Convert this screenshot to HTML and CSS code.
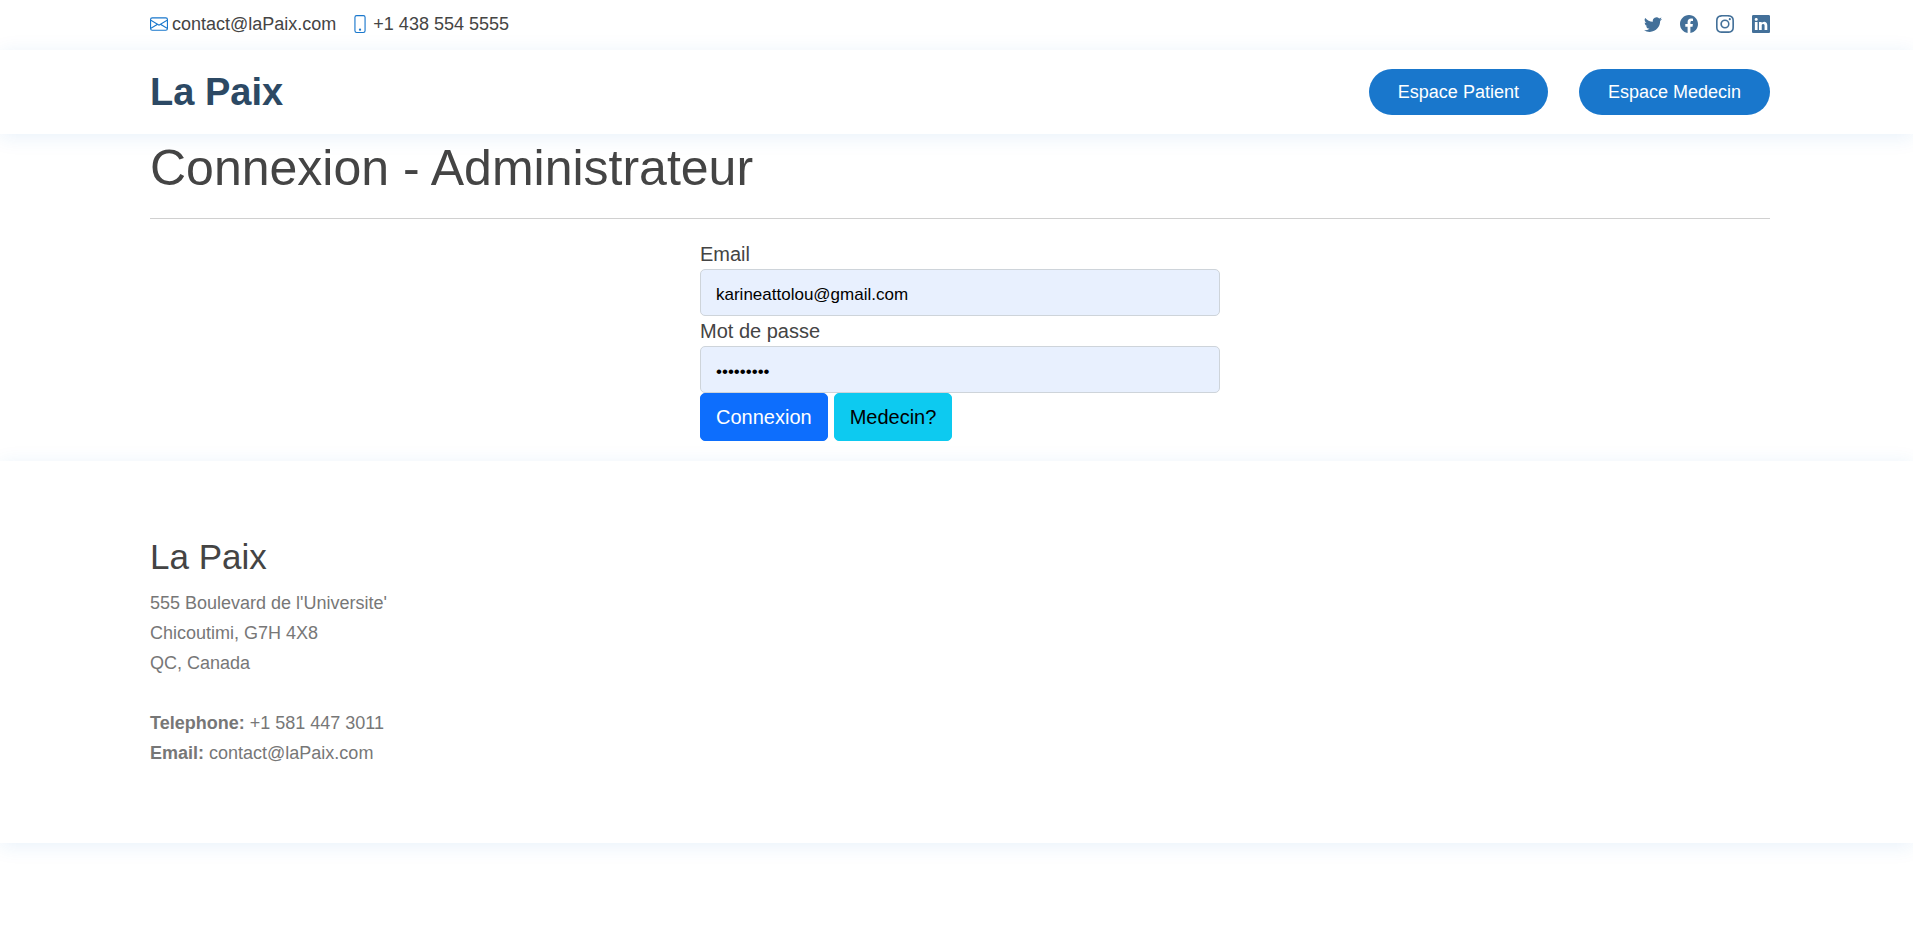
FILE: index.html
```html
<!DOCTYPE html>
<html lang="fr">
<head>
<meta charset="utf-8">
<title>La Paix - Connexion</title>
<link rel="stylesheet" href="styles.css">
</head>
<body>
<div class="topbar wrap">
  <div class="contact">
    <a href="mailto:contact@laPaix.com"><svg class="icon" viewBox="0 0 16 16"><path d="M0 4a2 2 0 0 1 2-2h12a2 2 0 0 1 2 2v8a2 2 0 0 1-2 2H2a2 2 0 0 1-2-2V4Zm2-1a1 1 0 0 0-1 1v.217l7 4.2 7-4.2V4a1 1 0 0 0-1-1H2Zm13 2.383-4.708 2.825L15 11.105V5.383Zm-.034 6.876-5.64-3.471L8 9.583l-1.326-.795-5.64 3.47A1 1 0 0 0 2 13h12a1 1 0 0 0 .966-.741ZM1 11.105l4.708-2.897L1 5.383v5.722Z"/></svg>contact@laPaix.com</a>
    <a href="tel:+14385545555"><svg class="icon" viewBox="0 0 16 16"><path d="M11 1a1 1 0 0 1 1 1v12a1 1 0 0 1-1 1H5a1 1 0 0 1-1-1V2a1 1 0 0 1 1-1h6zM5 0a2 2 0 0 0-2 2v12a2 2 0 0 0 2 2h6a2 2 0 0 0 2-2V2a2 2 0 0 0-2-2H5z"/><path d="M8 14a1 1 0 1 0 0-2 1 1 0 0 0 0 2z"/></svg>+1 438 554 5555</a>
  </div>
  <div class="social">
    <a href="#" aria-label="Twitter"><svg class="icon" viewBox="0 0 16 16"><path d="M5.026 15c6.038 0 9.341-5.003 9.341-9.334 0-.14 0-.282-.006-.422A6.685 6.685 0 0 0 16 3.542a6.658 6.658 0 0 1-1.889.518 3.301 3.301 0 0 0 1.447-1.817 6.533 6.533 0 0 1-2.087.793A3.286 3.286 0 0 0 7.875 6.03a9.325 9.325 0 0 1-6.767-3.429 3.289 3.289 0 0 0 1.018 4.382A3.323 3.323 0 0 1 .64 6.575v.045a3.288 3.288 0 0 0 2.632 3.218 3.203 3.203 0 0 1-.865.115 3.23 3.23 0 0 1-.614-.057 3.283 3.283 0 0 0 3.067 2.277A6.588 6.588 0 0 1 .78 13.58a6.32 6.32 0 0 1-.78-.045A9.344 9.344 0 0 0 5.026 15z"/></svg></a>
    <a href="#" aria-label="Facebook"><svg class="icon" viewBox="0 0 16 16"><path d="M16 8.049c0-4.446-3.582-8.05-8-8.05C3.58 0-.002 3.603-.002 8.05c0 4.017 2.926 7.347 6.75 7.951v-5.625h-2.03V8.05H6.75V6.275c0-2.017 1.195-3.131 3.022-3.131.876 0 1.791.157 1.791.157v1.98h-1.009c-.993 0-1.303.621-1.303 1.258v1.51h2.218l-.354 2.326H9.25V16c3.824-.604 6.75-3.934 6.75-7.951z"/></svg></a>
    <a href="#" aria-label="Instagram"><svg class="icon" viewBox="0 0 16 16"><path d="M8 0C5.829 0 5.556.01 4.703.048 3.85.088 3.269.222 2.76.42a3.917 3.917 0 0 0-1.417.923A3.927 3.927 0 0 0 .42 2.76C.222 3.268.087 3.85.048 4.7.01 5.555 0 5.827 0 8.001c0 2.172.01 2.444.048 3.297.04.852.174 1.433.372 1.942.205.526.478.972.923 1.417.444.445.89.719 1.416.923.51.198 1.09.333 1.942.372C5.555 15.99 5.827 16 8 16s2.444-.01 3.298-.048c.851-.04 1.434-.174 1.943-.372a3.916 3.916 0 0 0 1.416-.923c.445-.445.718-.891.923-1.417.197-.509.332-1.09.372-1.942C15.99 10.445 16 10.173 16 8s-.01-2.445-.048-3.299c-.04-.851-.175-1.433-.372-1.941a3.926 3.926 0 0 0-.923-1.417A3.911 3.911 0 0 0 13.24.42c-.51-.198-1.092-.333-1.943-.372C10.443.01 10.172 0 7.998 0h.003zm-.717 1.442h.718c2.136 0 2.389.007 3.232.046.78.035 1.204.166 1.486.275.373.145.64.319.92.599.28.28.453.546.598.92.11.281.24.705.275 1.485.039.843.047 1.096.047 3.231s-.008 2.389-.047 3.232c-.035.78-.166 1.203-.275 1.485a2.47 2.47 0 0 1-.599.919c-.28.28-.546.453-.92.598-.28.11-.704.24-1.485.276-.843.038-1.096.047-3.232.047s-2.39-.009-3.233-.047c-.78-.036-1.203-.166-1.485-.276a2.478 2.478 0 0 1-.92-.598 2.48 2.48 0 0 1-.6-.92c-.109-.281-.24-.705-.275-1.485-.038-.843-.046-1.096-.046-3.233 0-2.136.008-2.388.046-3.231.036-.78.166-1.204.276-1.486.145-.373.319-.64.599-.92.28-.28.546-.453.92-.598.282-.11.705-.24 1.485-.276.738-.034 1.024-.044 2.515-.045v.002zm4.988 1.328a.96.96 0 1 0 0 1.92.96.96 0 0 0 0-1.92zm-4.27 1.122a4.109 4.109 0 1 0 0 8.217 4.109 4.109 0 0 0 0-8.217zm0 1.441a2.667 2.667 0 1 1 0 5.334 2.667 2.667 0 0 1 0-5.334z"/></svg></a>
    <a href="#" aria-label="LinkedIn"><svg class="icon" viewBox="0 0 16 16"><path d="M0 1.146C0 .513.526 0 1.175 0h13.65C15.474 0 16 .513 16 1.146v13.708c0 .633-.526 1.146-1.175 1.146H1.175C.526 16 0 15.487 0 14.854V1.146zm4.943 12.248V6.169H2.542v7.225h2.401zm-1.2-8.212c.837 0 1.358-.554 1.358-1.248-.015-.709-.52-1.248-1.342-1.248-.822 0-1.359.54-1.359 1.248 0 .694.521 1.248 1.327 1.248h.016zm4.908 8.212V9.359c0-.216.016-.432.08-.586.173-.431.568-.878 1.232-.878.869 0 1.216.662 1.216 1.634v3.865h2.401V9.25c0-2.22-1.184-3.252-2.764-3.252-1.274 0-1.845.7-2.165 1.193v.025h-.016a5.54 5.54 0 0 1 .016-.025V6.169h-2.4c.03.678 0 7.225 0 7.225h2.4z"/></svg></a>
  </div>
</div>
<header class="header wrap">
  <a class="logo" href="#">La Paix</a>
  <nav class="nav">
    <a class="pill" href="#">Espace Patient</a>
    <a class="pill" href="#">Espace Medecin</a>
  </nav>
</header>
<main class="main wrap">
  <h1 class="title">Connexion - Administrateur</h1>
  <hr class="rule">
  <form class="form">
    <label class="label" for="email">Email</label>
    <input class="field" id="email" type="email" value="karineattolou@gmail.com">
    <label class="label" for="password">Mot de passe</label>
    <input class="field" id="password" type="password" value="motpasse1">
    <div class="actions">
      <button class="btn btn-primary" type="submit">Connexion</button>
      <a class="btn btn-info" href="#">Medecin?</a>
    </div>
  </form>
</main>
<footer class="footer wrap">
  <h3 class="footer-title">La Paix</h3>
  <p class="address">555 Boulevard de l'Universite'<br>Chicoutimi, G7H 4X8<br>QC, Canada<br><br><strong>Telephone:</strong> +1 581 447 3011<br><strong>Email:</strong> contact@laPaix.com</p>
</footer>
</body>
</html>
```
FILE: styles.css
```css
* { box-sizing: border-box; }
body {
  min-height: 100vh;
  margin: 0;
  background: #fff;
  color: #444;
  font: 20px/30px "Liberation Sans", Arial, sans-serif;
}
a { color: inherit; text-decoration: none; }
.wrap { padding-left: 150px; padding-right: 143px; }
.icon { width: 18px; height: 18px; fill: currentColor; display: block; }

.topbar {
  display: flex;
  align-items: center;
  justify-content: space-between;
  height: 50px;
  padding-bottom: 2px;
  font-size: 18px;
}
.contact { display: flex; gap: 15px; }
.contact a { display: flex; align-items: center; gap: 4px; }
.contact .icon { color: #1977cc; }
.social { display: flex; gap: 18px; color: #437099; }

.header,
.footer {
  position: relative;
  background: #fff;
  box-shadow: 0 3px 19px rgba(25, 119, 204, 0.1);
}
.header {
  display: flex;
  align-items: center;
  justify-content: space-between;
  padding-top: 19px;
  padding-bottom: 19px;
}
.logo { color: #2c4964; font-size: 38px; font-weight: 700; line-height: 46px; }
.nav { display: flex; gap: 31px; }
.pill {
  padding: 8px 29px;
  border-radius: 50px;
  background: #1977cc;
  color: #fff;
  font-size: 18px;
}

.main { position: relative; padding-top: 4px; padding-bottom: 20px; }
.title { margin: 0; font-size: 50px; font-weight: 400; line-height: 60px; }
.rule { margin: 20px 0; border: 0; border-top: 1px solid #d0d0d0; }
.form { width: 520px; max-width: 100%; margin: 0 auto; }
.label { display: block; }
.field {
  display: block;
  width: 100%;
  height: 47px;
  padding: 4px 15px 0;
  border: 1px solid #ced4da;
  border-radius: 5px;
  background: #e8f0fe;
  color: #000;
  font: 17px/30px "Liberation Sans", Arial, sans-serif;
}
.actions { display: flex; gap: 6px; }
.btn {
  padding: 8px 15px;
  border: 1px solid;
  border-radius: 5px;
  font: 20px/30px "Liberation Sans", Arial, sans-serif;
}
.btn-primary { border-color: #0d6efd; background: #0d6efd; color: #fff; }
.btn-info { border-color: #0dcaf0; background: #0dcaf0; color: #000; }

.footer { padding-top: 75px; padding-bottom: 75px; }
.footer-title { margin: 0 0 10px; font-size: 35px; font-weight: 400; line-height: 42px; }
.address { margin: 0; color: #777; font-size: 18px; }
```
